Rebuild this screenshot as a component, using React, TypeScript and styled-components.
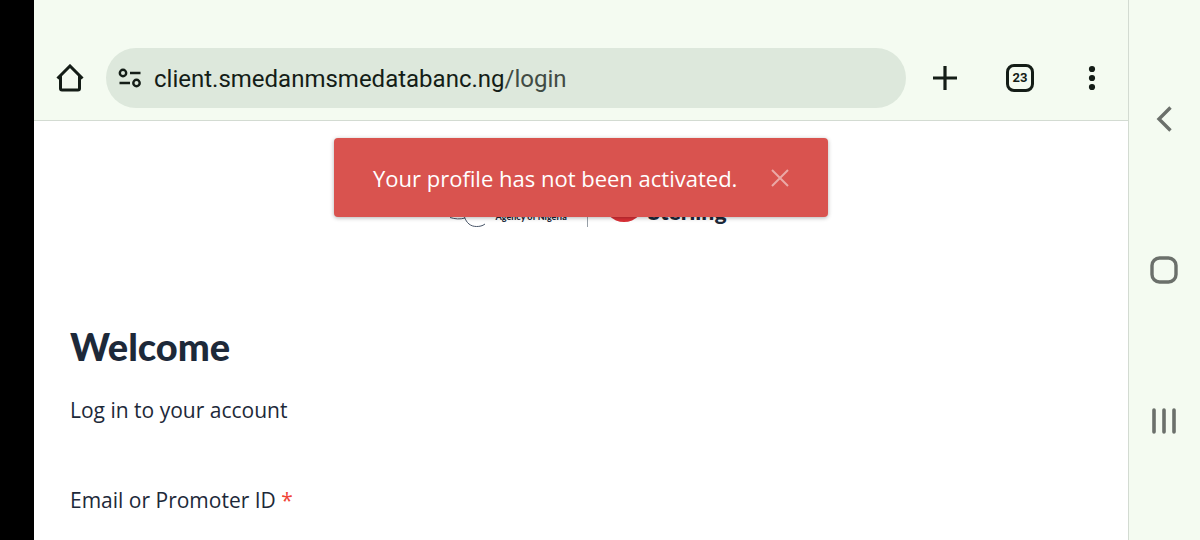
import React from "react";
import styled, { createGlobalStyle } from "styled-components";

const GlobalStyle = createGlobalStyle`
  *, *::before, *::after { box-sizing: border-box; }
  body { margin: 0; background: #000; }
  button, input { font: inherit; color: inherit; }
`;

const headingFont = `Lato, "Open Sans", sans-serif`;
const textFont = `"Open Sans", Lato, sans-serif`;

const Screen = styled.div`
  display: flex;
  height: 100vh;
  padding-left: 34px;
  overflow: hidden;
  background: #000;
`;

const Browser = styled.div`
  display: flex;
  flex: 1;
  flex-direction: column;
  min-width: 0;
  background: #fff;
`;

const Toolbar = styled.header`
  display: flex;
  flex: none;
  align-items: center;
  padding: 48px 0 12px;
  border-bottom: 1px solid #d3dbd2;
  background: #f4fbf1;
  color: #141d17;
`;

const IconButton = styled.button<{ $width?: number }>`
  display: flex;
  flex: none;
  align-items: center;
  justify-content: center;
  width: ${(p) => p.$width ?? 72}px;
  height: 60px;
  padding: 0;
  border: 0;
  background: none;
  cursor: pointer;
`;

const AddressBar = styled.button`
  display: flex;
  flex: 1;
  align-items: center;
  gap: 12px;
  min-width: 0;
  height: 60px;
  padding: 2px 12px 0;
  border: 0;
  border-radius: 30px;
  background: #dde8dc;
  font-family: Roboto, sans-serif;
  font-size: 24px;
  line-height: 32px;
  text-align: left;
  white-space: nowrap;
`;

const UrlPath = styled.span`
  color: #414b44;
`;

const TabCount = styled.span`
  display: flex;
  align-items: center;
  justify-content: center;
  width: 28px;
  height: 28px;
  border: 3px solid #141d17;
  border-radius: 8px;
  font-family: Roboto, sans-serif;
  font-size: 13px;
  font-weight: 700;
  line-height: 16px;
`;

const Page = styled.main`
  position: relative;
  flex: 1;
  min-height: 0;
  overflow: hidden;
  padding: 64px 36px 0;
  color: #1d2939;
  font-family: ${textFont};
`;

const Logos = styled.div`
  display: flex;
  align-items: flex-end;
  justify-content: center;
  height: 42px;
  padding-left: 14px;
`;

const AgencyName = styled.span`
  margin: 0 20px 0 8px;
  font-family: ${headingFont};
  font-size: 9px;
  font-weight: 900;
  line-height: 20px;
`;

const Divider = styled.span`
  width: 1px;
  height: 42px;
  margin-right: 15px;
  background: #98a0a8;
`;

const BankName = styled.span`
  margin-left: 3px;
  font-family: ${headingFont};
  font-size: 23px;
  font-weight: 900;
  line-height: 32px;
`;

const Title = styled.h1`
  margin: 95px 0 0;
  font-family: ${headingFont};
  font-size: 38px;
  font-weight: 900;
  line-height: 48px;
`;

const Subtitle = styled.p`
  margin: 24px 0 0;
  font-size: 21px;
  line-height: 32px;
`;

const Form = styled.form`
  margin-top: 58px;
`;

const Label = styled.label`
  display: block;
  font-size: 21px;
  line-height: 32px;
`;

const Required = styled.span`
  color: #f04438;
`;

const Field = styled.input`
  width: 100%;
  height: 64px;
  margin-top: 32px;
  padding: 0 20px;
  border: 1px solid #d0d5dd;
  border-radius: 6px;
`;

const ToastArea = styled.div`
  position: absolute;
  top: 17px;
  right: 0;
  left: 0;
  display: flex;
  justify-content: center;
`;

const Toast = styled.div`
  display: flex;
  align-items: center;
  justify-content: space-between;
  width: 494px;
  max-width: 100%;
  min-height: 79px;
  padding: 0 39px;
  border-radius: 4px;
  background: #d9534f;
  box-shadow: 0 1px 4px rgba(0, 0, 0, 0.3);
  color: #fff;
  font-size: 22px;
  font-weight: 500;
  line-height: 32px;
`;

const CloseButton = styled.button`
  display: flex;
  padding: 0;
  border: 0;
  background: none;
  color: #eba9a6;
  cursor: pointer;
`;

const SystemNav = styled.nav`
  display: flex;
  flex: none;
  flex-direction: column;
  justify-content: space-evenly;
  width: 72px;
  padding-right: 1px;
  border-left: 1px solid #d3dbd2;
  background: #f4fbf1;
  color: #6b706b;
`;

const NavButton = styled(IconButton)`
  width: 100%;
  height: 64px;
`;

export default function App() {
  return (
    <Screen>
      <GlobalStyle />
      <Browser>
        <Toolbar>
          <IconButton aria-label="Home">
            <svg width="28" height="28" viewBox="0 0 28 28" fill="none" stroke="currentColor" strokeWidth="3">
              <path d="M1.500 14.500 14 2l12.500 12.500M4.500 12V24.500a1.500 1.500 0 0 0 1.500 1.500H22a1.500 1.500 0 0 0 1.500-1.500V12" />
            </svg>
          </IconButton>
          <AddressBar aria-label="Address bar">
            <svg width="24" height="24" viewBox="0 0 24 24" fill="none" stroke="currentColor" strokeWidth="2.400">
              <circle cx="5" cy="6" r="3.200" />
              <path d="M12 6h10.500M1.500 16H12" />
              <circle cx="18.500" cy="16" r="3.200" />
            </svg>
            <span>
              client.smedanmsmedatabanc.ng<UrlPath>/login</UrlPath>
            </span>
          </AddressBar>
          <IconButton $width={78} aria-label="New tab">
            <svg width="24" height="24" viewBox="0 0 24 24" fill="none" stroke="currentColor" strokeWidth="3.200">
              <path d="M12 0v24M0 12h24" />
            </svg>
          </IconButton>
          <IconButton aria-label="Open tabs">
            <TabCount>23</TabCount>
          </IconButton>
          <IconButton aria-label="Menu">
            <svg width="8" height="26" viewBox="0 0 8 26" fill="currentColor">
              <circle cx="4" cy="4" r="3.100" />
              <circle cx="4" cy="13" r="3.100" />
              <circle cx="4" cy="22" r="3.100" />
            </svg>
          </IconButton>
        </Toolbar>

        <Page>
          <Logos>
            <svg width="38" height="42" viewBox="0 0 38 42" fill="none" stroke="#475467" strokeWidth="1">
              <path d="M1 32.500c5 1.500 10 2 15 .5M15.500 32c2 6 6 9.500 12 9.500 3 0 6-.5 8.500-2.500" />
            </svg>
            <AgencyName>Agency of Nigeria</AgencyName>
            <Divider />
            <svg width="42" height="47" viewBox="0 0 42 47">
              <circle cx="21" cy="21" r="21" fill="#db3037" />
            </svg>
            <BankName>Sterling</BankName>
          </Logos>
          <Title>Welcome</Title>
          <Subtitle>Log in to your account</Subtitle>
          <Form>
            <Label htmlFor="login-id">
              Email or Promoter ID <Required>*</Required>
            </Label>
            <Field id="login-id" type="text" required />
          </Form>
          <ToastArea>
            <Toast role="alert">
              <span>Your profile has not been activated.</span>
              <CloseButton aria-label="Close">
                <svg width="18" height="18" viewBox="0 0 18 18" fill="none" stroke="currentColor" strokeWidth="2">
                  <path d="m1 1 16 16M17 1 1 17" />
                </svg>
              </CloseButton>
            </Toast>
          </ToastArea>
        </Page>
      </Browser>

      <SystemNav aria-label="System navigation">
        <NavButton aria-label="Back">
          <svg width="16" height="26" viewBox="0 0 16 26" fill="none" stroke="currentColor" strokeWidth="3.400">
            <path d="M14.500 1.500 3 13l11.500 11.500" />
          </svg>
        </NavButton>
        <NavButton aria-label="Home screen">
          <svg width="28" height="28" viewBox="0 0 28 28" fill="none" stroke="currentColor" strokeWidth="3.400">
            <rect x="2" y="2" width="24" height="24" rx="7.500" />
          </svg>
        </NavButton>
        <NavButton aria-label="Recent apps">
          <svg width="26" height="26" viewBox="0 0 26 26" fill="none" stroke="currentColor" strokeWidth="3.600" strokeLinecap="round">
            <path d="M3 2v22M13 2v22M23 2v22" />
          </svg>
        </NavButton>
      </SystemNav>
    </Screen>
  );
}
